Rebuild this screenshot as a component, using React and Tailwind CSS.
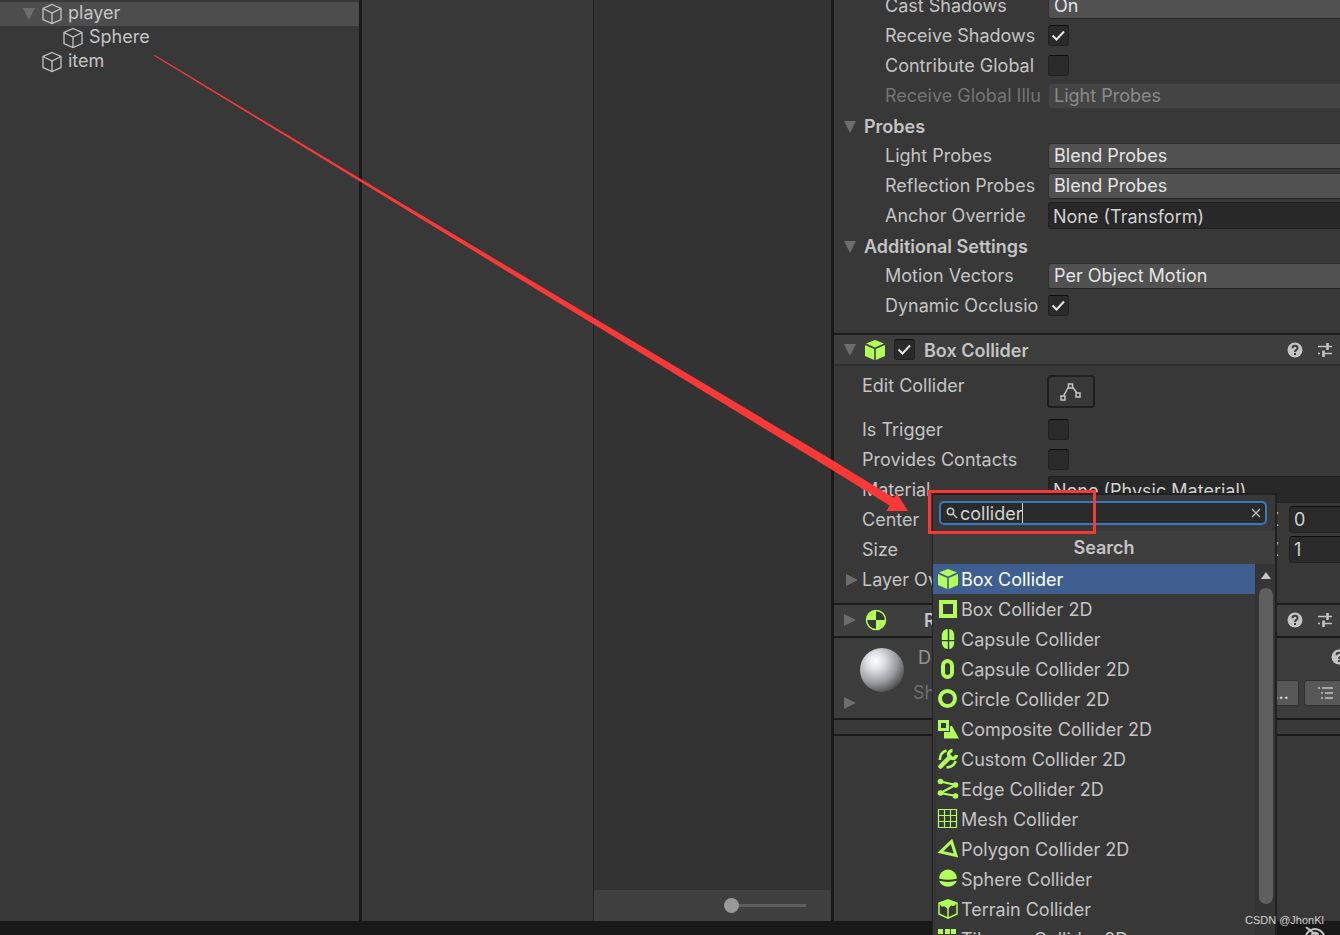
import { useState } from "react";

const GREEN = "#b1fd59";

const colliders = [
  { name: "Box Collider", icon: "box" },
  { name: "Box Collider 2D", icon: "box2d" },
  { name: "Capsule Collider", icon: "capsule" },
  { name: "Capsule Collider 2D", icon: "capsule2d" },
  { name: "Circle Collider 2D", icon: "circle2d" },
  { name: "Composite Collider 2D", icon: "composite" },
  { name: "Custom Collider 2D", icon: "custom" },
  { name: "Edge Collider 2D", icon: "edge" },
  { name: "Mesh Collider", icon: "mesh" },
  { name: "Polygon Collider 2D", icon: "polygon" },
  { name: "Sphere Collider", icon: "sphere" },
  { name: "Terrain Collider", icon: "terrain" },
  { name: "Tilemap Collider 2D", icon: "tilemap" },
];

// 22x22 drawings, one per collider type
const shapes = {
  box: (
    <g fill={GREEN}>
      <path d="M11 1 20 4.5 11 8.5 2 4.5Z" />
      <path d="M1 6 10.2 10V21L1 17Z" />
      <path d="M21 6 11.8 10V21L21 17Z" />
    </g>
  ),
  box2d: <rect x="4" y="4" width="14" height="14" fill="none" stroke={GREEN} strokeWidth="4" />,
  capsule: (
    <g fill={GREEN}>
      <path d="M10.8 1C7 1.200 4.800 4 4.800 8V12H10.800Z" />
      <path d="M12.200 1C15.500 1.200 17.200 4 17.200 8V12H12.200Z" />
      <path d="M4.800 13.200H10.800V21C7 20.800 4.800 18 4.800 13.200Z" />
      <path d="M12.200 13.200H17.200C17.200 18 15.500 20.800 12.200 21Z" />
    </g>
  ),
  capsule2d: <rect x="6" y="3" width="9" height="16" rx="4.500" fill="none" stroke={GREEN} strokeWidth="4" />,
  circle2d: <circle cx="10.500" cy="10.500" r="7.500" fill="none" stroke={GREEN} strokeWidth="4" />,
  composite: (
    <g>
      <rect x="2.500" y="3.500" width="8" height="8" fill="none" stroke={GREEN} strokeWidth="3" />
      <path d="M15 8 22 20.500H7V14H13V8Z" fill={GREEN} />
    </g>
  ),
  custom: (
    <g fill="none" stroke={GREEN}>
      <path d="M3.500 18.500 13 9" strokeWidth="4.500" strokeLinecap="round" />
      <path d="M15.500 2.500A4 4 0 1 0 19.500 7" strokeWidth="3.500" />
      <path d="M2.800 12C2.800 7 5 4 9.500 2.500" strokeWidth="2.600" />
      <path d="M9.500 19.500C14 19.200 17.500 16.500 18.700 13" strokeWidth="2.600" />
    </g>
  ),
  edge: (
    <g fill={GREEN}>
      <path d="M3.500 3.500 18.500 7 3.500 15 19 18" fill="none" stroke={GREEN} strokeWidth="2.200" />
      <circle cx="3.500" cy="3.500" r="2.800" />
      <circle cx="18.500" cy="7" r="2.800" />
      <circle cx="3.500" cy="15" r="2.800" />
      <circle cx="18.500" cy="18" r="2.800" />
    </g>
  ),
  mesh: (
    <path
      d="M1.500 1.500H19.500V19.500H1.500ZM7.500 1.500V19.500M13.500 1.500V19.500M1.500 7.500H19.500M1.500 13.500H19.500"
      fill="none"
      stroke={GREEN}
      strokeWidth="1.200"
    />
  ),
  polygon: <path d="M14.500 3.500 19 17.500 3.500 14Z" fill="none" stroke={GREEN} strokeWidth="3" />,
  sphere: (
    <g fill={GREEN}>
      <path d="M2 10.500A9 9 0 0 1 20 10.500Q11 13 2 10.500Z" />
      <path d="M2.200 12.800Q11 15 19.800 12.800A9 7.500 0 0 1 2.200 12.800Z" />
    </g>
  ),
  terrain: (
    <g fill={GREEN}>
      <path d="M11 1 20.500 4.500 17 8 14 7.500 11 11 7 8 5 9 1.500 4.500Z" />
      <path d="M2 4.500V16L11 20.200 20 16V4.500M11 9V20" fill="none" stroke={GREEN} strokeWidth="1.500" />
    </g>
  ),
  tilemap: (
    <g fill={GREEN}>
      <rect x="1" y="1" width="5" height="5" />
      <rect x="8" y="1" width="5" height="5" />
      <rect x="14" y="1" width="5" height="5" />
      <rect x="1" y="8" width="5" height="5" />
      <rect x="8" y="8" width="5" height="5" />
    </g>
  ),
};

const ColliderIcon = ({ name }) => (
  <svg viewBox="0 0 22 22" className="h-[22px] w-[22px] shrink-0" aria-hidden="true">
    {shapes[name]}
  </svg>
);

const CubeIcon = () => (
  <svg viewBox="0 0 22 22" className="h-[22px] w-[22px] shrink-0" fill="none" stroke="#c4c4c4" strokeWidth="1.300" aria-hidden="true">
    <path d="M11 1.500 20 5.500V16.500L11 20.500 2 16.500V5.500ZM2 5.500 11 10 20 5.500M11 10V20.500" />
  </svg>
);

const Arrow = ({ open }) => (
  <svg viewBox="0 0 12 12" className="h-3 w-3 shrink-0" fill="#6d6d6d" aria-hidden="true">
    {open ? <path d="M0 0H12L6 12Z" /> : <path d="M0 0 12 6 0 12Z" />}
  </svg>
);

const HelpIcon = () => (
  <svg viewBox="0 0 16 16" className="h-4 w-4 shrink-0" aria-hidden="true">
    <circle cx="8" cy="8" r="7.500" fill="#c4c4c4" />
    <path d="M5.500 6.200C5.500 3 10.500 3 10.500 6.200 10.500 8 8 7.800 8 10" fill="none" stroke="#3c3c3c" strokeWidth="2" />
    <rect x="7" y="11" width="2" height="2" fill="#3c3c3c" />
  </svg>
);

const PresetIcon = () => (
  <svg viewBox="0 0 16 16" className="h-4 w-4 shrink-0" fill="none" stroke="#c4c4c4" aria-hidden="true">
    <path d="M1 4.500H9.500M10 4.500H15M1 11.500H3M6 11.500H15" strokeWidth="1.400" />
    <path d="M10.500 1V8M6.500 8.500V15" strokeWidth="2.600" />
  </svg>
);

const HeaderTools = () => (
  <div className="ml-auto flex gap-[14px] pr-[7px]">
    <button type="button" aria-label="Help"><HelpIcon /></button>
    <button type="button" aria-label="Presets"><PresetIcon /></button>
  </div>
);

const CheckBox = ({ id, label, defaultChecked }) => (
  <span className="relative mb-px flex h-[21px] w-[21px] shrink-0">
    <input
      id={id}
      type="checkbox"
      aria-label={label}
      defaultChecked={defaultChecked}
      className="peer h-[21px] w-[21px] appearance-none rounded-[3px] border border-[#212121] border-t-[#0d0d0d] bg-[#2a2a2a]"
    />
    <svg viewBox="0 0 21 21" className="pointer-events-none invisible absolute inset-0 peer-checked:visible" fill="none" stroke="#e4e4e4" strokeWidth="2" aria-hidden="true">
      <path d="M4.500 10.500 8.500 14.500 16 6.500" />
    </svg>
  </span>
);

// One label + control line of the inspector
const Row = ({ id, label, nested, disabled, children }) => (
  <div className={nested ? "flex h-[30px] items-center pl-[51px]" : "flex h-[30px] items-center pl-7"}>
    <label
      htmlFor={id}
      className={
        (nested ? "w-[159px] " : "w-[182px] ") +
        "mr-1 shrink-0 overflow-hidden whitespace-nowrap" +
        (disabled ? " text-[#757575]" : "")
      }
    >
      {label}
    </label>
    {children}
  </div>
);

const DropDown = ({ id, value, disabled }) => (
  <select
    id={id}
    disabled={disabled}
    className="h-[26px] min-w-0 flex-1 appearance-none rounded-l-[3px] border border-r-0 border-[#303030] border-b-[#242424] bg-[#515151] pl-[5px] text-[#e4e4e4] disabled:border-[#3a3a3a] disabled:bg-[#444444] disabled:text-[#8a8a8a] disabled:opacity-100"
  >
    <option>{value}</option>
  </select>
);

const ObjectField = ({ id, value }) => (
  <input
    id={id}
    type="text"
    defaultValue={value}
    className="mb-px h-[27px] min-w-0 flex-1 rounded-l-[3px] border border-r-0 border-[#212121] bg-[#282828] pl-1 pt-px text-[#d2d2d2]"
  />
);

const VectorRow = ({ id, label, z }) => (
  <Row id={id} label={label}>
    <span className="ml-auto pr-[10px]">Z</span>
    <input
      id={id}
      type="text"
      defaultValue={z}
      className="mb-px h-[27px] w-[51px] rounded-l-[4px] border border-r-0 border-[#212121] border-t-[#0d0d0d] bg-[#2a2a2a] pl-1 text-[#d2d2d2]"
    />
  </Row>
);

const Foldout = ({ title }) => (
  <div className="flex h-[30px] items-center gap-2 pl-[10px] pt-[2px] font-semibold">
    <Arrow open />
    {title}
  </div>
);

const Hierarchy = () => (
  <aside className="border-r-[3px] border-[#191919] pt-[2px]">
    <ul>
      <li className="flex h-6 items-center bg-[#4d4d4d] pl-[23px]">
        <Arrow open />
        <span className="ml-[6px] mr-[5px]"><CubeIcon /></span>
        <span className="pb-[2px]">player</span>
      </li>
      <li className="flex h-6 items-center gap-[5px] pl-[62px]">
        <CubeIcon />
        <span className="pb-[2px]">Sphere</span>
      </li>
      <li className="flex h-6 items-center gap-[5px] pl-[41px]">
        <CubeIcon />
        <span className="pb-[2px]">item</span>
      </li>
    </ul>
  </aside>
);

const AddComponent = () => {
  const [query, setQuery] = useState("collider");
  const [selected, setSelected] = useState("Box Collider");

  return (
    <div className="absolute left-[98px] top-[493px] z-10 w-[345px] border-l border-r-2 border-t-2 border-[#212121] bg-[#383838]">
      <div className="bg-[#383838] py-[6px] pl-[6px] pr-2">
        <div className="flex h-6 items-center rounded-[5px] border-2 border-[#3a79bb] bg-[#2a2a2a] pl-[5px] pr-1">
          <svg viewBox="0 0 12 12" className="h-3 w-3 shrink-0" fill="none" stroke="#c4c4c4" strokeWidth="1.500" aria-hidden="true">
            <circle cx="4.500" cy="4.500" r="3.200" />
            <path d="M7 7 11 11" />
          </svg>
          <label htmlFor="component-search" className="sr-only">Search components</label>
          <span className="flex min-w-0 flex-1 items-center pl-[2px]">
            <input
              id="component-search"
              type="text"
              value={query}
              onChange={(e) => setQuery(e.target.value)}
              className="field-sizing-content max-w-full pt-px text-[#d2d2d2] outline-none"
            />
            <span className="h-5 w-px bg-[#d2d2d2]" />
          </span>
          <button type="button" aria-label="Clear" onClick={() => setQuery("")}>
            <svg viewBox="0 0 10 10" className="h-[10px] w-[10px]" stroke="#c4c4c4" strokeWidth="1.200" aria-hidden="true">
              <path d="M1 1 9 9M9 1 1 9" />
            </svg>
          </button>
        </div>
      </div>
      <h2 className="flex h-[33px] items-center justify-center bg-[#3e3e3e] font-semibold">Search</h2>
      <div className="flex">
        <ul className="min-w-0 flex-1">
          {colliders.map((item) => (
            <li key={item.name}>
              <button
                type="button"
                onClick={() => setSelected(item.name)}
                className={
                  "flex h-[30px] w-full items-center gap-[2px] whitespace-nowrap pl-1 " +
                  (item.name === selected ? "bg-[#3e5f90] text-white" : "")
                }
              >
                <ColliderIcon name={item.icon} />
                <span className="pt-[2px]">{item.name}</span>
              </button>
            </li>
          ))}
        </ul>
        {/* Scrollbar */}
        <div className="flex w-5 flex-col items-center border-l border-[#323232] bg-[#353535] pt-2">
          <svg viewBox="0 0 10 7" className="h-[7px] w-[10px]" fill="#c4c4c4" aria-hidden="true">
            <path d="M5 0 10 7H0Z" />
          </svg>
          <div className="mt-[9px] h-[316px] w-[14px] rounded-full bg-[#5f5f5f]" />
        </div>
      </div>
    </div>
  );
};

const Inspector = () => (
  <main className="relative min-w-0 bg-[#383838]">
    <section className="h-[333px] overflow-hidden">
      {/* scrolled down by a few pixels */}
      <div className="-mt-[9px]">
        <Row id="cast" label="Cast Shadows" nested><DropDown id="cast" value="On" /></Row>
        <Row id="receive" label="Receive Shadows" nested><CheckBox id="receive" defaultChecked /></Row>
        <Row id="contribute" label="Contribute Global" nested><CheckBox id="contribute" /></Row>
        <Row id="gi" label="Receive Global Illu" nested disabled><DropDown id="gi" value="Light Probes" disabled /></Row>
        <Foldout title="Probes" />
        <Row id="light" label="Light Probes" nested><DropDown id="light" value="Blend Probes" /></Row>
        <Row id="reflection" label="Reflection Probes" nested><DropDown id="reflection" value="Blend Probes" /></Row>
        <Row id="anchor" label="Anchor Override" nested><ObjectField id="anchor" value="None (Transform)" /></Row>
        <Foldout title="Additional Settings" />
        <Row id="motion" label="Motion Vectors" nested><DropDown id="motion" value="Per Object Motion" /></Row>
        <Row id="occlusion" label="Dynamic Occlusio" nested><CheckBox id="occlusion" defaultChecked /></Row>
      </div>
    </section>

    <section className="border-t-2 border-[#1a1a1a]">
      <header className="flex h-[31px] items-center border-b-2 border-[#303030] bg-[#3e3e3e] pl-[10px]">
        <Arrow open />
        <span className="ml-2 mr-2"><ColliderIcon name="box" /></span>
        <CheckBox label="Enable Box Collider" defaultChecked />
        <h2 className="ml-[9px] pt-[2px] font-semibold">Box Collider</h2>
        <HeaderTools />
      </header>
      <div className="h-[237px] pt-[5px]">
        <div className="flex h-11 pl-7">
          <span className="w-[185px] leading-[30px]">Edit Collider</span>
          <button type="button" aria-label="Edit Collider" className="mt-1 flex h-[33px] w-12 items-center justify-center rounded-[4px] border-2 border-[#1f1f1f]">
            <svg viewBox="0 0 22 20" className="h-5 w-[22px]" fill="none" stroke="#c4c4c4" strokeWidth="1.500" aria-hidden="true">
              <rect x="1" y="14" width="4" height="4" />
              <rect x="8.500" y="2" width="4" height="4" />
              <rect x="16" y="11" width="4" height="4" />
              <path d="M3.500 14 8.500 5M12.500 5 17 11" />
            </svg>
          </button>
        </div>
        <Row id="trigger" label="Is Trigger"><CheckBox id="trigger" /></Row>
        <Row id="contacts" label="Provides Contacts"><CheckBox id="contacts" /></Row>
        <Row id="material" label="Material"><ObjectField id="material" value="None (Physic Material)" /></Row>
        <VectorRow id="center" label="Center" z="0" />
        <VectorRow id="size" label="Size" z="1" />
        <div className="flex h-[30px] items-center gap-1 pl-3">
          <Arrow />
          Layer Overrides
        </div>
      </div>
    </section>

    <section className="border-t-2 border-[#1a1a1a]">
      <header className="flex h-[31px] items-center bg-[#3e3e3e] pb-[2px] pl-[10px]">
        <Arrow />
        <svg viewBox="0 0 22 22" className="ml-[9px] h-[22px] w-[22px]" aria-hidden="true">
          <circle cx="11" cy="11" r="9.500" fill="#383838" stroke={GREEN} strokeWidth="1.500" />
          <path d="M11 11V1.500A9.500 9.500 0 0 0 1.500 11ZM11 11V20.500A9.500 9.500 0 0 0 20.500 11Z" fill={GREEN} />
        </svg>
        <h2 className="ml-[37px] pt-[2px] font-semibold">Rigidbody</h2>
        <HeaderTools />
      </header>
    </section>

    <section className="flex h-[82px] border-t-2 border-[#1a1a1a] bg-[#3c3c3c]">
      <div className="flex w-[26px] items-end pb-[9px] pl-[10px]"><Arrow /></div>
      <svg viewBox="0 0 44 44" className="mt-[10px] h-11 w-11 shrink-0" aria-hidden="true">
        <defs>
          <radialGradient id="ball" cx="0.35" cy="0.3" r="0.75">
            <stop offset="0" stopColor="#ffffff" />
            <stop offset="0.25" stopColor="#dfe2e6" />
            <stop offset="0.65" stopColor="#9a9da2" />
            <stop offset="1" stopColor="#4c4b4a" />
          </radialGradient>
        </defs>
        <circle cx="22" cy="22" r="22" fill="url(#ball)" />
      </svg>
      <div className="ml-[9px] pt-[5px] text-[#969696]">
        <div className="pl-[5px] leading-[30px]">Default-Material</div>
        <div className="mt-[5px] leading-[30px] text-[#6e6e6e]">Shader</div>
      </div>
      <div className="ml-auto flex flex-col items-end pt-[11px]">
        <button type="button" aria-label="Material help" className="-mr-[7px]"><HelpIcon /></button>
        <div className="mt-[15px] flex gap-[5px]">
          <button type="button" className="flex h-[26px] w-[60px] items-center justify-end rounded-[3px] border border-[#303030] bg-[#585858] pr-[9px] text-[#e4e4e4]">Edit...</button>
          <button type="button" aria-label="Material options" className="flex h-[26px] w-9 items-center justify-center rounded-l-[3px] border border-r-0 border-[#303030] bg-[#585858]">
            <svg viewBox="0 0 16 14" className="ml-[6px] h-[14px] w-4" stroke="#c4c4c4" strokeWidth="1.400" aria-hidden="true">
              <path d="M0 2H2M4 2H15M3 7H5M7 7H15M3 12H5M7 12H15" />
            </svg>
          </button>
        </div>
      </div>
    </section>
    <div className="h-[18px] border-y-2 border-[#1a1a1a]" />

    <AddComponent />
    {/* Frame around the search box */}
    <div className="pointer-events-none absolute left-[94px] top-[490px] z-20 h-11 w-[168px] border-[3px] border-[#fb3838]" />
  </main>
);

const App = () => (
  <div className="relative flex h-screen flex-col overflow-hidden bg-[#191919] font-['Inter',sans-serif] text-[18px] leading-6 text-[#c4c4c4]">
    <div className="grid min-h-0 flex-1 grid-cols-[362fr_232fr_240fr_506fr] bg-[#383838]">
      <Hierarchy />
      <div className="border-r border-[#232323]" />
      <div className="flex flex-col border-r-[3px] border-[#191919] bg-[#333333]">
        <div className="mt-auto flex h-[31px] items-center justify-end bg-[#404040] pr-[25px]">
          <input
            type="range"
            aria-label="Icon size"
            min="0"
            max="100"
            defaultValue="0"
            className="h-[15px] w-[82px] appearance-none bg-transparent [&::-webkit-slider-runnable-track]:h-[3px] [&::-webkit-slider-runnable-track]:bg-[#5e5e5e] [&::-webkit-slider-thumb]:-mt-[6px] [&::-webkit-slider-thumb]:h-[15px] [&::-webkit-slider-thumb]:w-[15px] [&::-webkit-slider-thumb]:appearance-none [&::-webkit-slider-thumb]:rounded-full [&::-webkit-slider-thumb]:bg-[#999999]"
          />
        </div>
      </div>
      <Inspector />
    </div>

    {/* Status bar */}
    <footer className="flex h-[14px] items-end justify-end gap-5 overflow-hidden pr-[14px]">
      <svg viewBox="0 0 20 8" className="h-2 w-5" aria-hidden="true">
        <path d="M0 8V2C4 0 8 2 9 5L8 8Z" fill="#d2d2d2" />
      </svg>
      <svg viewBox="0 0 22 8" className="h-2 w-[22px]" fill="none" stroke="#c4c4c4" strokeWidth="2" aria-hidden="true">
        <path d="M2 8C7 0 15 0 20 8M2 0 12 8M8 8C8 5 14 5 14 8" />
      </svg>
    </footer>

    {/* Pointer from the hierarchy to the search box */}
    <svg viewBox="0 0 910 520" className="pointer-events-none absolute left-0 top-0 z-20 h-[520px] w-[910px]" aria-hidden="true">
      <path d="M153.500 55.500 154.500 54.800 360 178.500 833 460.500 894 498 897 493.500 908 511 886.500 511 889.500 505.500 829 468 360 181.500Z" fill="#fb3838" />
    </svg>

    <p className="absolute bottom-2 right-4 z-30 font-['Liberation_Sans',sans-serif] text-[11px] leading-[14px] text-[#d2d2d2]">
      CSDN @JhonKl
    </p>
  </div>
);

export default App;
